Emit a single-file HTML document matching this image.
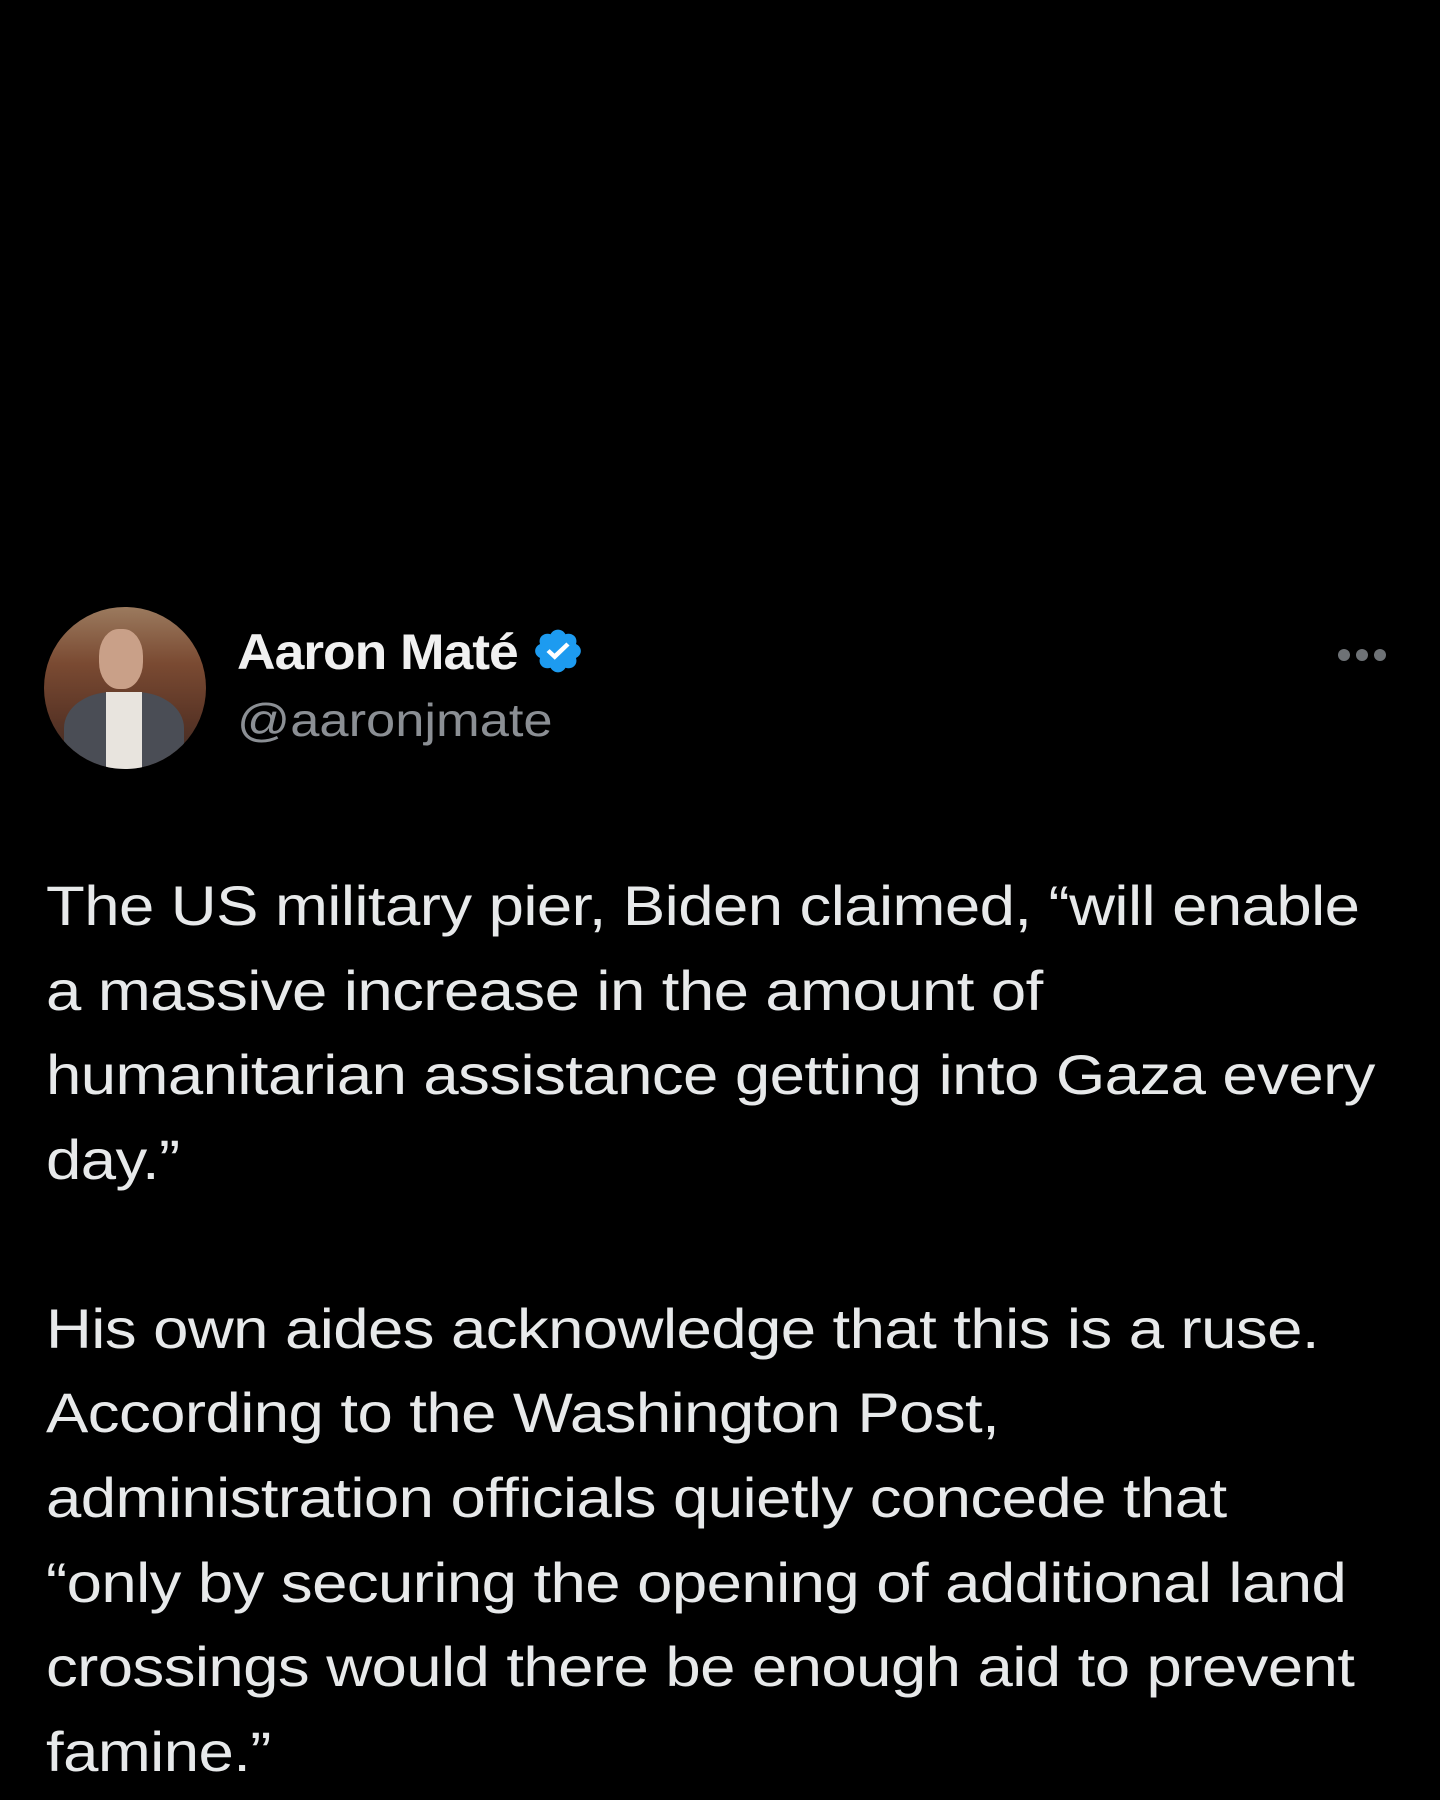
<!DOCTYPE html>
<html><head><meta charset="utf-8"><style>
html,body{margin:0;padding:0;background:#000;width:1440px;height:1800px;overflow:hidden}
body{font-family:"Liberation Sans",sans-serif;color:#e7e9ea;position:relative}
.av{position:absolute;left:44px;top:607px;width:162px;height:162px;border-radius:50%;overflow:hidden;background:linear-gradient(180deg,#9b7a5e 0%,#7a4a32 35%,#5a3526 70%,#3a2a25 100%)}
.name{position:absolute;left:237px;top:623px;font-size:50px;font-weight:bold;color:#f0f0f0;white-space:nowrap;letter-spacing:-1px;transform:scaleX(1.07);transform-origin:left}
.handle{position:absolute;left:237px;top:693px;font-size:46px;color:#8b8f94;white-space:nowrap;transform:scaleX(1.14);transform-origin:left}
.dots{position:absolute;left:1338px;top:648px}
.dots span{display:inline-block;width:12px;height:12px;border-radius:50%;background:#6e7276;margin-right:6px}
.l{position:absolute;left:46px;font-size:56px;white-space:nowrap;line-height:1;letter-spacing:-0.5px;transform:scaleX(1.134);transform-origin:left;margin-top:-4px}
</style></head><body>
<div class="av">
<div style="position:absolute;left:55px;top:22px;width:44px;height:60px;border-radius:45%;background:#c9a088"></div>
<div style="position:absolute;left:20px;top:85px;width:120px;height:90px;border-radius:40% 40% 0 0;background:#4a4d55"></div>
<div style="position:absolute;left:62px;top:85px;width:36px;height:90px;background:#e8e4de"></div>
</div>
<div class="name">Aaron Maté <svg width="50" height="50" viewBox="0 0 24 24" style="vertical-align:-7px"><path fill="#1d9bf0" d="M22.25 12c0-1.430-.88-2.670-2.190-3.340.46-1.390.2-2.900-.81-3.910s-2.520-1.270-3.910-.81c-.66-1.310-1.910-2.190-3.340-2.190s-2.670.88-3.330 2.190c-1.400-.46-2.910-.2-3.920.81s-1.260 2.520-.8 3.910c-1.310.67-2.200 1.910-2.200 3.340s.89 2.670 2.200 3.340c-.46 1.390-.21 2.900.8 3.910s2.520 1.260 3.910.81c.67 1.310 1.910 2.190 3.340 2.190s2.680-.88 3.340-2.190c1.390.45 2.900.2 3.910-.81s1.270-2.520.81-3.910c1.310-.67 2.190-1.910 2.190-3.340z"/><path fill="#fff" d="M10.54 16.2l-3.7-3.7 1.41-1.42 2.2 2.2 5.3-5.35 1.43 1.41z"/></svg></div>
<div class="handle">@aaronjmate</div>
<div class="dots"><span></span><span></span><span></span></div>
<div class="l" style="top:882px">The US military pier, Biden claimed, “will enable</div>
<div class="l" style="top:967px">a massive increase in the amount of</div>
<div class="l" style="top:1051px">humanitarian assistance getting into Gaza every</div>
<div class="l" style="top:1136px">day.”</div>
<div class="l" style="top:1305px">His own aides acknowledge that this is a ruse.</div>
<div class="l" style="top:1389px">According to the Washington Post,</div>
<div class="l" style="top:1474px">administration officials quietly concede that</div>
<div class="l" style="top:1559px">“only by securing the opening of additional land</div>
<div class="l" style="top:1643px">crossings would there be enough aid to prevent</div>
<div class="l" style="top:1728px">famine.”</div>
</body></html>
